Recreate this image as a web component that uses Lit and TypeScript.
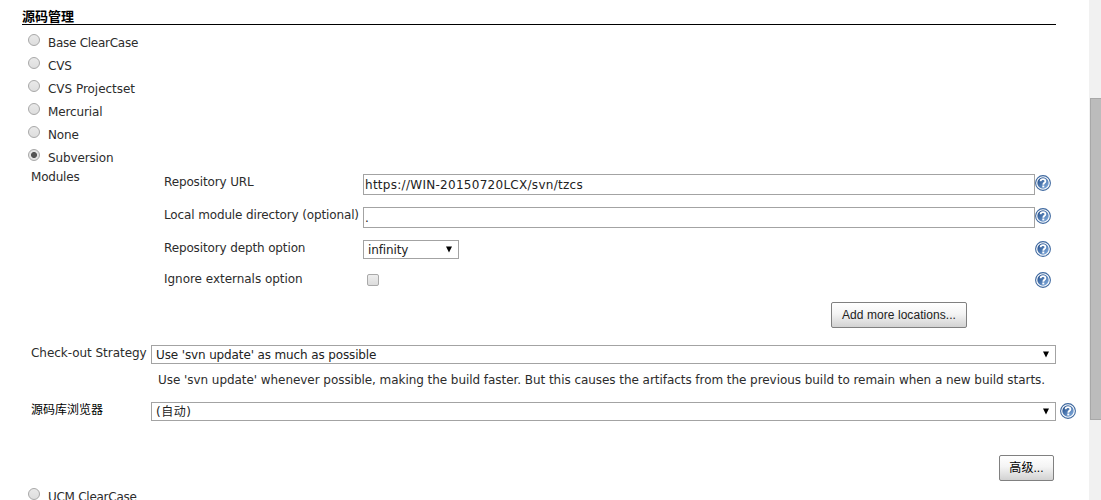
import { LitElement, html, css } from "lit";
import { customElement, property } from "lit/decorators.js";

/** Round blue question mark shown at the end of a form row */
@customElement("help-icon")
export class HelpIcon extends LitElement {
  static styles = css`
    :host {
      display: block;
      width: 16px;
      height: 16px;
    }

    .icon {
      display: block;
      width: 16px;
      height: 16px;
    }
  `;

  render() {
    return html`
      <svg class="icon" viewBox="0 0 16 16">
        <defs>
          <linearGradient id="disc" x1="0" y1="0" x2="1" y2="1">
            <stop offset="0.1" stop-color="#234f8c" />
            <stop offset="0.9" stop-color="#7fa9db" />
          </linearGradient>
        </defs>
        <circle cx="8" cy="8" r="7.4" fill="#fff" stroke="#3e689f" stroke-width="1.1" />
        <circle cx="8" cy="8" r="5.7" fill="url(#disc)" />
        <path
          d="M5.6 6.3C5.6 4.8 6.6 4.2 8 4.2s2.4.8 2.4 2c0 1.6-2.1 1.6-2.1 3.5"
          fill="none"
          stroke="#fff"
          stroke-width="1.8"
        />
        <rect x="7.3" y="10.5" width="2" height="1.9" fill="#fff" />
      </svg>
    `;
  }
}

@customElement("scm-radio")
export class ScmRadio extends LitElement {
  static styles = css`
    :host {
      display: flex;
      height: 23px;
      padding-left: 28px;
    }

    .dot {
      box-sizing: border-box;
      flex: none;
      width: 12px;
      height: 12px;
      margin: 3px 8px 0 0;
      border: 1px solid #a8a8a8;
      border-radius: 50%;
      background: linear-gradient(#e9e9e9, #dedede);
    }

    .checked {
      background: radial-gradient(circle, #555 0 2.6px, #e4e4e4 3.4px);
    }

    .label {
      line-height: 24px;
    }
  `;

  @property() label = "";
  @property({ type: Boolean }) checked = false;

  render() {
    return html`
      <span class="dot ${this.checked ? "checked" : ""}"></span>
      <span class="label">${this.label}</span>
    `;
  }
}

@customElement("drop-down")
export class DropDown extends LitElement {
  static styles = css`
    :host {
      box-sizing: border-box;
      display: flex;
      justify-content: space-between;
      height: 19px;
      padding: 0 5px 0 4px;
      border: 1px solid #a3a3a3;
      background: #fff;
      line-height: 18px;
      color: #222;
    }

    .arrow {
      width: 8px;
      height: 7px;
      margin-top: 5px;
    }
  `;

  @property() value = "";

  render() {
    return html`
      <span>${this.value}</span>
      <svg class="arrow" viewBox="0 0 8 7"><path d="M1 0.5H7L4 6.5Z" fill="#000" /></svg>
    `;
  }
}

@customElement("app-root")
export class AppRoot extends LitElement {
  static styles = css`
    :host {
      display: flex;
      width: 1101px;
      height: 500px;
      overflow: hidden;
      background: #fff;
      color: #2c2c2c;
      font: 12px "DejaVu Sans", "Noto Sans CJK SC", sans-serif;
      letter-spacing: -0.13px;
      white-space: nowrap;
    }

    .page {
      width: 1089px;
    }

    .heading {
      box-sizing: border-box;
      width: 1034px;
      height: 25px;
      margin: 0 0 6px 22px;
      padding-top: 7px;
      border-bottom: 1px solid #000;
      color: #000;
      font: bold 13px/17px "Noto Sans CJK SC", sans-serif;
      letter-spacing: 0;
    }

    .clearcase {
      letter-spacing: -0.27px;
    }

    .projectset {
      letter-spacing: -0.03px;
    }

    .modules {
      display: grid;
      grid-template-columns: 133px 199px 672px 16px;
      grid-template-rows: 33px 33px 31px 31px 43px;
      height: 171px;
      padding: 5px 0 0 31px;
    }

    .modules-label {
      grid-row: 1 / span 5;
      margin-top: -5px;
      line-height: 16px;
      letter-spacing: -0.2px;
    }

    .name {
      line-height: 16px;
    }

    .ignore {
      letter-spacing: -0.03px;
    }

    .field {
      box-sizing: border-box;
      height: 21px;
      border: 1px solid #a3a3a3;
      padding-left: 1px;
      line-height: 20px;
      color: #222;
      letter-spacing: 0.28px;
    }

    .depth {
      width: 96px;
    }

    .check {
      box-sizing: border-box;
      width: 12px;
      height: 12px;
      margin: 3px 0 0 4px;
      border: 1px solid #a9a9a9;
      border-radius: 2px;
      background: linear-gradient(#eee, #dcdcdc);
    }

    .help {
      margin-top: 1px;
    }

    .button {
      box-sizing: border-box;
      height: 26px;
      border: 1px solid #808080;
      border-radius: 2px;
      background: linear-gradient(#fff, #f4f4f4 45%, #d2d2d2);
      color: #222;
      text-align: center;
      font: 12px/24px "Liberation Sans", "Noto Sans CJK SC", sans-serif;
      letter-spacing: 0.06px;
    }

    .add {
      grid-column: 3;
      width: 136px;
      margin-left: 468px;
    }

    .row {
      display: grid;
      grid-template-columns: 120px 905px 16px;
      padding-left: 31px;
    }

    .strategy {
      height: 26px;
    }

    .strategy .name {
      letter-spacing: -0.04px;
    }

    .description {
      height: 31px;
      padding-left: 158px;
      line-height: 18px;
      letter-spacing: -0.053px;
    }

    .browser {
      grid-template-columns: 120px 909px 16px;
      height: 53px;
    }

    .browser drop-down {
      width: 905px;
      line-height: 19px;
      letter-spacing: 0.5px;
    }

    .chinese {
      color: #000;
      letter-spacing: 0;
    }

    .advanced {
      width: 55px;
      margin: 0 0 4px 999px;
      color: #000;
    }

    .scrollbar {
      box-sizing: border-box;
      width: 12px;
      padding: 98px 0 0 1px;
      background: #f1f1f1;
    }

    .thumb {
      box-sizing: border-box;
      width: 11px;
      height: 322px;
      border: 1px solid #a8a8a8;
      border-right: none;
      background: #bcbcbc;
    }
  `;

  render() {
    return html`
      <div class="page">
        <div class="heading">源码管理</div>
        <scm-radio class="clearcase" label="Base ClearCase"></scm-radio>
        <scm-radio label="CVS"></scm-radio>
        <scm-radio class="projectset" label="CVS Projectset"></scm-radio>
        <scm-radio label="Mercurial"></scm-radio>
        <scm-radio label="None"></scm-radio>
        <scm-radio label="Subversion" checked></scm-radio>

        <div class="modules">
          <div class="modules-label">Modules</div>
          <div class="name">Repository URL</div>
          <div class="field">https://WIN-20150720LCX/svn/tzcs</div>
          <help-icon class="help"></help-icon>
          <div class="name">Local module directory (optional)</div>
          <div class="field">.</div>
          <help-icon class="help"></help-icon>
          <div class="name">Repository depth option</div>
          <drop-down class="depth" value="infinity"></drop-down>
          <help-icon class="help"></help-icon>
          <div class="name ignore">Ignore externals option</div>
          <div class="check"></div>
          <help-icon class="help"></help-icon>
          <div class="button add">Add more locations...</div>
        </div>

        <div class="row strategy">
          <div class="name">Check-out Strategy</div>
          <drop-down value="Use 'svn update' as much as possible"></drop-down>
        </div>
        <div class="description">
          Use 'svn update' whenever possible, making the build faster. But this causes the artifacts from the previous build to remain when a new build starts.
        </div>
        <div class="row browser">
          <div class="name chinese">源码库浏览器</div>
          <drop-down value="(自动)"></drop-down>
          <help-icon class="help"></help-icon>
        </div>
        <div class="button advanced">高级...</div>
        <scm-radio class="clearcase" label="UCM ClearCase"></scm-radio>
      </div>
      <div class="scrollbar"><div class="thumb"></div></div>
    `;
  }
}
